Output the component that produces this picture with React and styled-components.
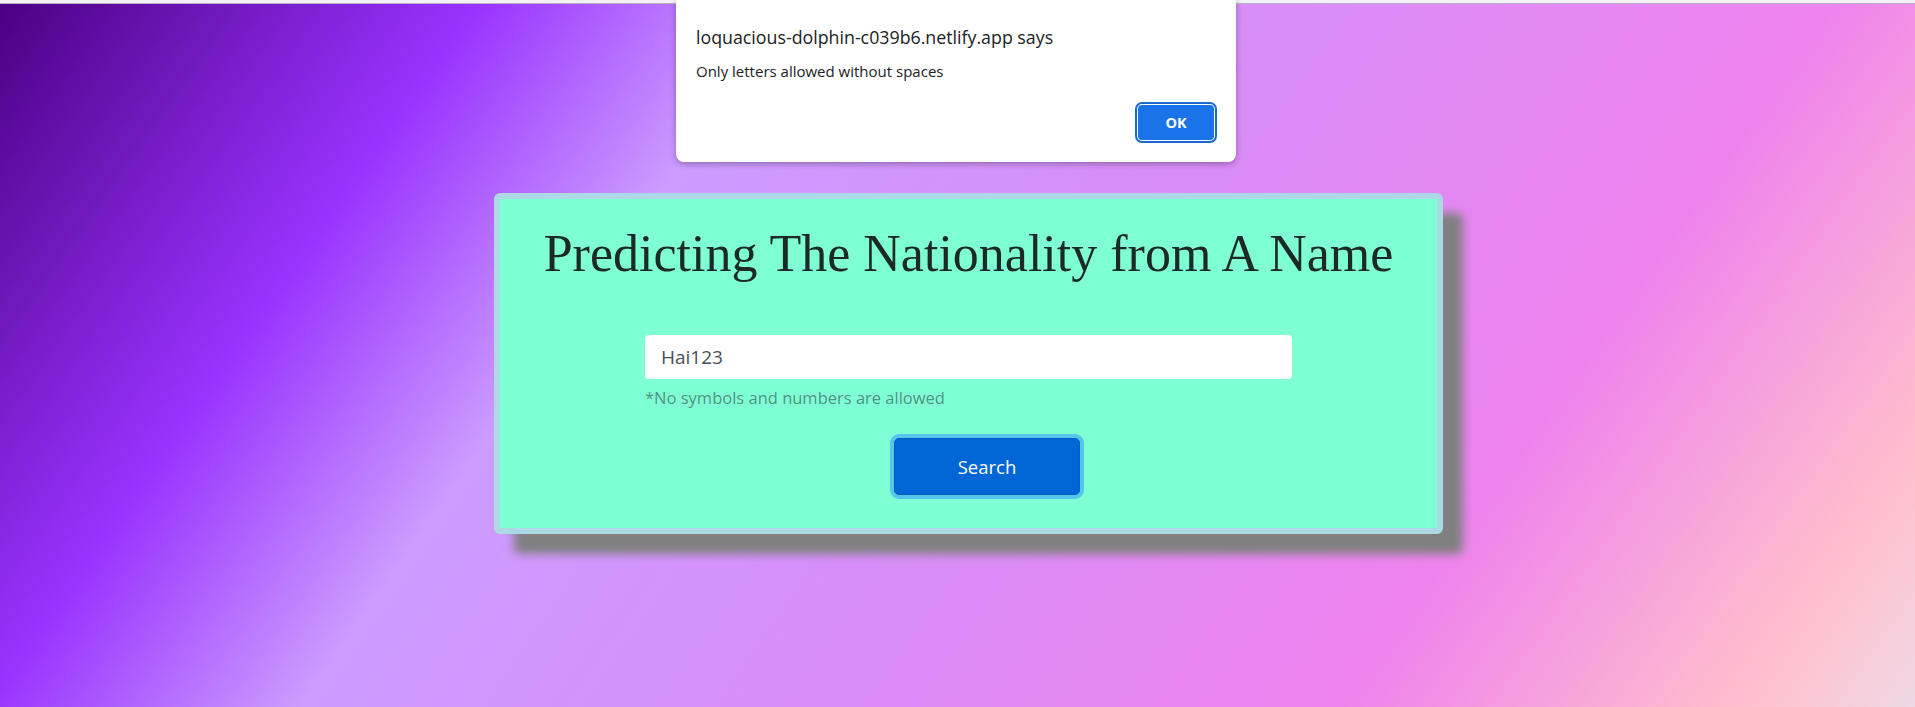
import React from 'react'
import styled, { createGlobalStyle } from 'styled-components'

const GlobalStyle = createGlobalStyle`
  html, body {
    margin: 0;
    padding: 0;
  }
  body {
    font-family: "Open Sans", "Noto Sans", sans-serif;
  }
`

const StyledPage = styled.div`
  background: linear-gradient(125deg, #4b0082 0%, #9933ff 20%, #cc9cff 33%, #d98cf7 55%, #ee82ee 76%, #ffc0cb 93%, #efd8e6 100%);
  display: flex;
  flex-direction: column;
  min-height: 707px;
  position: relative;
`

const StyledTopStrip = styled.div`
  background: #f3f1f5;
  border-bottom: 1px solid rgba(60, 20, 90, 0.3);
  height: 3px;
`

const StyledMain = styled.main`
  display: flex;
  justify-content: center;
  padding: 189px 0 0 22px;
`

const StyledCard = styled.section`
  align-items: center;
  background: #7fffd4;
  border: 6px solid #add8e6;
  border-radius: 6px;
  box-shadow: 20px 20px 10px #808080;
  box-sizing: border-box;
  display: flex;
  flex-direction: column;
  padding: 25px 0 33px;
  width: 949px;
`

const StyledTitle = styled.h1`
  color: #1c2a26;
  font-family: "Liberation Serif", "DejaVu Serif", serif;
  font-size: 52px;
  font-weight: 400;
  line-height: 60px;
  margin: 0;
`

const StyledForm = styled.form`
  display: flex;
  flex-direction: column;
  margin-top: 51px;
  width: 647px;
`

const StyledInput = styled.input`
  background: #ffffff;
  border: none;
  border-radius: 4px;
  box-sizing: border-box;
  color: #495057;
  font-family: "Open Sans", "Noto Sans", sans-serif;
  font-size: 19px;
  height: 44px;
  outline: none;
  padding: 0 16px;
  width: 100%;
`

const StyledHelp = styled.small`
  color: rgba(40, 48, 52, 0.55);
  display: block;
  font-size: 16.5px;
  line-height: 24px;
  margin-top: 7px;
`

const StyledButton = styled.button`
  align-self: center;
  background: #0066d6;
  border: 1px solid #005cbf;
  border-radius: 5px;
  box-shadow: 0 0 0 4px rgba(38, 143, 255, 0.5);
  color: #ffffff;
  cursor: pointer;
  font-family: "Open Sans", "Noto Sans", sans-serif;
  font-size: 18.5px;
  height: 57px;
  margin: 28px 0 0 37px;
  width: 186px;
`

const StyledAlert = styled.div`
  background: #ffffff;
  border-radius: 0 0 8px 8px;
  box-shadow: 0 2px 6px rgba(0, 0, 0, 0.3);
  box-sizing: border-box;
  color: #202124;
  display: flex;
  flex-direction: column;
  height: 162px;
  left: 676px;
  padding: 26px 20px 0;
  position: absolute;
  top: 0;
  width: 560px;
`

const StyledAlertTitle = styled.div`
  font-size: 17.8px;
  line-height: 22px;
`

const StyledAlertMessage = styled.div`
  font-size: 15px;
  line-height: 20px;
  margin-top: 13px;
`

const StyledAlertActions = styled.div`
  display: flex;
  justify-content: flex-end;
  margin-top: 24px;
`

const StyledOkButton = styled.button`
  background: #1a73e8;
  border: none;
  border-radius: 4px;
  box-shadow: 0 0 0 1px #ffffff, 0 0 0 3px #1b68d3;
  color: #ffffff;
  font-family: "Open Sans", "Noto Sans", sans-serif;
  font-size: 14.5px;
  font-weight: 700;
  height: 35px;
  margin-right: 2px;
  width: 76px;
`

const App = () => {
  return (
    <StyledPage>
      <GlobalStyle />
      <StyledTopStrip />
      <StyledMain>
        <StyledCard>
          <StyledTitle>Predicting The Nationality from A Name</StyledTitle>
          <StyledForm onSubmit={(e) => e.preventDefault()}>
            <StyledInput type="text" defaultValue="Hai123" />
            <StyledHelp>*No symbols and numbers are allowed</StyledHelp>
            <StyledButton type="submit">Search</StyledButton>
          </StyledForm>
        </StyledCard>
      </StyledMain>
      <StyledAlert role="alertdialog">
        <StyledAlertTitle>loquacious-dolphin-c039b6.netlify.app says</StyledAlertTitle>
        <StyledAlertMessage>Only letters allowed without spaces</StyledAlertMessage>
        <StyledAlertActions>
          <StyledOkButton type="button">OK</StyledOkButton>
        </StyledAlertActions>
      </StyledAlert>
    </StyledPage>
  )
}

export default App
